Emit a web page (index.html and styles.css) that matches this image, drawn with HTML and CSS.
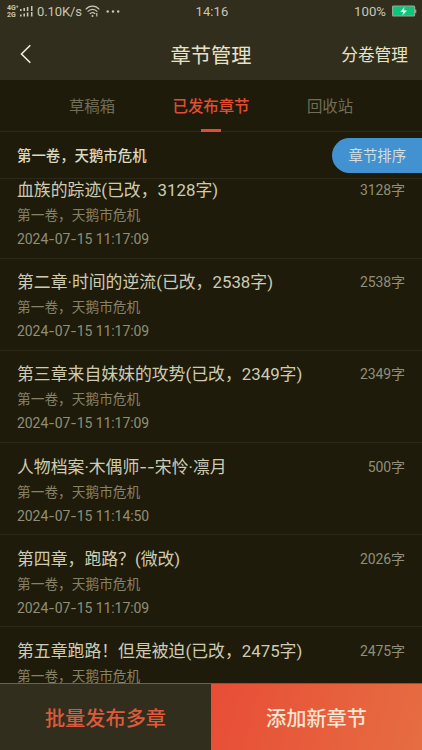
FILE: index.html
```html
<!DOCTYPE html>
<html lang="zh-CN">
<head>
<meta charset="utf-8">
<title>章节管理</title>
<link rel="stylesheet" href="styles.css">
</head>
<body>
<div class="app">
  <header class="top">
    <div class="status">
      <div class="status-left">
        <span class="nets"><b>4G⁺</b><b>2G</b></span>
        <svg class="signal" width="14" height="13" viewBox="0 0 14 13" fill="#c9c6b4"><path d="M0 4h1.6v2H0zM3.4 3h1.6v3H3.400zM6.800 2h1.600v4H6.800zM11 1h1.500v5H11zM0 9.500h1.600v2H0zM3.400 8.500h1.600v3H3.400zM6.800 7.500h1.600v4H6.800zM11 7h1.500v4.500H11z"/></svg>
        <span class="speed">0.10K/s</span>
        <svg class="wifi" width="15" height="13" viewBox="0 0 15 13" fill="none" stroke="#c9c6b4" stroke-width="1.2"><path d="M.7 4.300C4.500.1 10.500.1 14.300 4.300M2.600 6.700C5.500 3.600 9.500 3.600 12.400 6.700M4.700 8.900C6.500 7.100 8.500 7.100 10.200 8.800"/><circle cx="7.500" cy="11" r="1" fill="#c9c6b4" stroke="none"/><path d="M11.800 8v3.500"/></svg>
        <svg class="dots" width="14" height="3" viewBox="0 0 14 3" fill="#c9c6b4"><circle cx="1.700" cy="1.500" r="1.200"/><circle cx="7" cy="1.500" r="1.200"/><circle cx="12.200" cy="1.500" r="1.200"/></svg>
      </div>
      <span class="clock">14:16</span>
      <div class="status-right">
        <span>100%</span>
        <svg width="25" height="13" viewBox="0 0 25 13"><rect x=".6" y="1" width="22" height="10" rx="1" fill="#0bc77c" stroke="#9da391" stroke-width="1.200"/><path d="M23 4.500h1.300v3.500H23z" fill="#9da391"/><path d="M12.600 1.900 8.300 6.900h3l-1 3.500L15 5.500h-3.100z" fill="#fff"/></svg>
      </div>
    </div>
    <nav class="bar">
      <svg class="back" width="12" height="20" viewBox="0 0 12 20" fill="none" stroke="#efecd2" stroke-width="1.600"><path d="M10.300 1.200 1.500 10l8.800 8.800"/></svg>
      <h1>章节管理</h1>
      <a class="manage">分卷管理</a>
    </nav>
  </header>

  <div class="tabs">
    <a class="tab">草稿箱</a>
    <a class="tab on">已发布章节</a>
    <a class="tab">回收站</a>
  </div>

  <div class="volume">
    <h2>第一卷，天鹅市危机</h2>
    <a class="sort">章节排序</a>
  </div>

  <main class="list">
    <article class="row">
      <div class="line"><h3>血族的踪迹(已改，3128字)</h3><span class="count">3128字</span></div>
      <p class="meta">第一卷，天鹅市危机</p>
      <p class="date">2024<i>-</i>07<i>-</i>15 11:17:09</p>
    </article>
    <article class="row">
      <div class="line"><h3>第二章·时间的逆流(已改，2538字)</h3><span class="count">2538字</span></div>
      <p class="meta">第一卷，天鹅市危机</p>
      <p class="date">2024<i>-</i>07<i>-</i>15 11:17:09</p>
    </article>
    <article class="row">
      <div class="line"><h3>第三章来自妹妹的攻势(已改，2349字)</h3><span class="count">2349字</span></div>
      <p class="meta">第一卷，天鹅市危机</p>
      <p class="date">2024<i>-</i>07<i>-</i>15 11:17:09</p>
    </article>
    <article class="row">
      <div class="line"><h3>人物档案·木偶师<i>--</i>宋怜·凛月</h3><span class="count">500字</span></div>
      <p class="meta">第一卷，天鹅市危机</p>
      <p class="date">2024<i>-</i>07<i>-</i>15 11:14:50</p>
    </article>
    <article class="row">
      <div class="line"><h3>第四章，跑路？(微改)</h3><span class="count">2026字</span></div>
      <p class="meta">第一卷，天鹅市危机</p>
      <p class="date">2024<i>-</i>07<i>-</i>15 11:17:09</p>
    </article>
    <article class="row">
      <div class="line"><h3>第五章跑路！但是被迫(已改，2475字)</h3><span class="count">2475字</span></div>
      <p class="meta">第一卷，天鹅市危机</p>
    </article>
  </main>

  <footer class="actions">
    <a class="batch">批量发布多章</a>
    <a class="add">添加新章节</a>
  </footer>
</div>
</body>
</html>
```
FILE: styles.css
```css
* { box-sizing: border-box; margin: 0; padding: 0; }

body {
  background: #1e1b0a;
  color: #d6d3b9;
  font-family: Roboto, "Noto Sans CJK SC", sans-serif;
}

h1, h2, h3 { font-weight: 400; }
i { font-family: Inter, sans-serif; font-style: normal; }
svg { display: block; flex: none; }

.app {
  width: 422px;
  height: 750px;
  display: flex;
  flex-direction: column;
  overflow: hidden;
  white-space: nowrap;
}

.top { height: 80px; flex: none; background: #322e1d; }

.status {
  height: 23px;
  padding: 0 5px 0 7px;
  display: grid;
  grid-template-columns: 1fr auto 1fr;
  align-items: center;
  font-size: 13.200px;
  line-height: 23px;
  color: #c9c6b4;
}
.status-left, .status-right { display: flex; align-items: center; height: 22px; }
.status-right { justify-content: flex-end; gap: 6px; }
.nets {
  width: 13px;
  display: flex;
  flex-direction: column;
  font-size: 7px;
  line-height: 6.500px;
}
.speed { margin-left: 3px; width: 45px; font-size: 13px; letter-spacing: -.1px; }
.wifi { margin-left: 3px; }
.dots { margin-left: 6px; }
.clock { font-size: 13px; letter-spacing: .1px; }

.bar {
  height: 57px;
  padding: 0 14px 0 20px;
  display: grid;
  grid-template-columns: 1fr auto 1fr;
  align-items: center;
  color: #e6e3ca;
}
.bar .back { margin-top: 4px; }
.bar h1 { font-size: 20.200px; line-height: 30px; margin-top: 8px; padding-right: 6px; }
.manage { justify-self: end; font-size: 16.700px; line-height: 24px; margin-top: 9px; }

.tabs {
  height: 52px;
  flex: none;
  display: grid;
  grid-template-columns: 119px 119px 119px;
  justify-content: center;
  border-bottom: 1px solid #2c2918;
  font-size: 15.400px;
  line-height: 54px;
  text-align: center;
  color: #716e58;
}
.tab.on {
  height: 52px;
  display: flex;
  flex-direction: column;
  align-items: center;
  font-weight: 500;
  color: #e04d33;
}
.tab.on::after { content: ""; width: 20px; height: 3px; flex: none; background: #e04d33; margin-top: -5px; }

.volume {
  height: 47px;
  flex: none;
  display: flex;
  align-items: center;
  justify-content: space-between;
  padding-left: 17px;
  border-bottom: 1px solid #2c2918;
}
.volume h2 { font-size: 14.400px; line-height: 20px; font-weight: 500; color: #dcd9c1; padding-top: 3px; }
.sort {
  width: 90px;
  height: 35px;
  padding-left: 16.500px;
  margin-top: 1px;
  border-radius: 17.500px 0 0 17.500px;
  background: #4292d2;
  color: #d0dedf;
  font-size: 14.400px;
  line-height: 37px;
}

.list { height: 504px; flex: none; overflow: hidden; }
.row {
  height: 92.200px;
  padding: 11.500px 17px 0;
  border-bottom: 1px solid #2c2918;
}
.row:first-child { margin-top: -12.500px; }
.line { display: flex; justify-content: space-between; align-items: center; }
.line h3 { font-size: 16.850px; line-height: 24px; color: #cecbb3; }
.count { font-size: 14px; letter-spacing: -.1px; line-height: 24px; color: #918e77; }
.meta { margin-top: 3px; font-size: 13.700px; line-height: 20px; color: #858269; }
.date { margin-top: 4px; font-size: 14px; letter-spacing: -.06px; line-height: 20px; color: #918e77; }

.actions {
  height: 67px;
  flex: none;
  display: grid;
  grid-template-columns: 1fr 1fr;
  border-top: 1px solid #b8432b;
  font-size: 20.200px;
  font-weight: 500;
  line-height: 70px;
  text-align: center;
}
.batch { background: #322e1d; color: #dc5a3b; }
.add { background: linear-gradient(105deg, #e84d36, #e66d42); color: #f8e5d2; }
```
